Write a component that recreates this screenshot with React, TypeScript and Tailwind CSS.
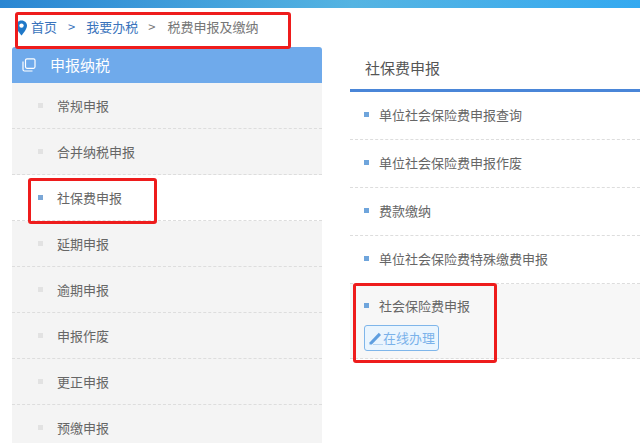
const font = { fontFamily: '"Noto Sans CJK SC", "Liberation Sans", sans-serif' };

const sideItems = ['常规申报', '合并纳税申报', '社保费申报', '延期申报', '逾期申报', '申报作废', '更正申报', '预缴申报'];
const rightItems = ['单位社会保险费申报查询', '单位社会保险费申报作废', '费款缴纳', '单位社会保险费特殊缴费申报'];

const RedBox = ({ className }: { className: string }) => (
  <div className={`absolute border-[3px] border-[#ee1c1c] rounded-[3px] pointer-events-none ${className}`} />
);

const App = () => {
  return (
    <div className="relative w-[640px] h-[443px] overflow-hidden bg-white" style={font}>
      {/* top banner strip */}
      <div className="h-2 bg-gradient-to-r from-[#2a86d2] via-[#55b4e2] via-55% to-[#33a9f0]" />

      {/* breadcrumb */}
      <div className="h-[39px] flex items-center pl-[15px] pb-[2px] text-[13px] text-[#777]">
        <svg width="13" height="16" viewBox="0 0 13 16" className="mr-[3px] mt-[2px]">
          <path d="M6.5 0.5C3.2 0.5 1 3 1 5.8 1 9.5 6.5 15.5 6.5 15.5S12 9.5 12 5.8C12 3 9.8 0.5 6.5 0.5Z" fill="#1f78c8" />
          <circle cx="6.5" cy="5.6" r="2.2" fill="#fff" />
        </svg>
        <span className="text-[#3a74bc]">首页</span>
        <span className="mx-[11px] text-[#3a74bc]">&gt;</span>
        <span className="text-[#3a74bc]">我要办税</span>
        <span className="ml-[10px] mr-[12px]">&gt;</span>
        <span>税费申报及缴纳</span>
      </div>

      <div className="flex items-start pl-3">
        {/* left nav */}
        <div className="w-[310px]">
          <div className="h-[36px] bg-[#6faaeb] rounded-t-[3px] flex items-center pl-[10px] text-[15px] text-white">
            <svg width="14" height="14" viewBox="0 0 14 14" fill="none" stroke="#fff" strokeWidth="1.2" className="mr-[14px]">
              <rect x="3.5" y="0.8" width="9.5" height="9.5" rx="1.5" />
              <path d="M1 3.5V11.5C1 12.4 1.6 13 2.5 13H10.5" />
            </svg>
            申报纳税
          </div>
          {sideItems.map((item) => {
            const active = item === '社保费申报';
            return (
              <div
                key={item}
                className={`h-[46px] flex items-center pl-[26px] text-[13px] text-[#666] border-b border-dashed border-[#ddd] ${active ? 'bg-white' : 'bg-[#f4f4f4]'}`}
              >
                <span className={`w-[5px] h-[5px] mr-[14px] ${active ? 'bg-[#7ba7d6]' : 'bg-[#e2e2e2]'}`} />
                {item}
              </div>
            );
          })}
        </div>

        {/* right panel */}
        <div className="ml-[28px] flex-1">
          <div className="h-[41px] pl-[15px] pt-[2px] flex items-center text-[15px] text-[#555] border-b-[3px] border-[#4a86d8] box-content -mt-[1px]">
            社保费申报
          </div>
          {rightItems.map((item) => (
            <div key={item} className="h-[48px] flex items-center pl-[14px] pb-[2px] text-[13px] text-[#666] border-b border-dashed border-[#ddd]">
              <span className="w-[5px] h-[5px] mr-[10px] bg-[#6fa5dc]" />
              {item}
            </div>
          ))}
          <div className="h-[75px] bg-[#f7f7f7] pl-[14px] pt-[12px] border-b border-dashed border-[#ddd]">
            <div className="flex items-center text-[13px] text-[#666]">
              <span className="w-[5px] h-[5px] mr-[10px] bg-[#6fa5dc]" />
              社会保险费申报
            </div>
            <div className="mt-[9px] w-[75px] h-[26px] flex items-center pl-[4px] rounded-[3px] border border-[#7fb6ea] bg-[#eaf5fe] text-[13px] text-[#7ab2ea]">
              <svg width="14" height="14" viewBox="0 0 14 14" className="shrink-0">
                <path d="M0.5 11.5L9.8 1.8 12 4 2.8 13.4H0.5Z" fill="#5f9fe0" />
                <path d="M4 13.5H14" stroke="#a9cdef" strokeWidth="0.8" />
              </svg>
              在线办理
            </div>
          </div>
        </div>
      </div>

      {/* red annotation boxes */}
      <RedBox className="left-[15px] top-[12px] w-[276px] h-[37px]" />
      <RedBox className="left-[28px] top-[178px] w-[129px] h-[46px]" />
      <RedBox className="left-[353px] top-[283px] w-[144px] h-[80px]" />
    </div>
  );
};

export default App;
